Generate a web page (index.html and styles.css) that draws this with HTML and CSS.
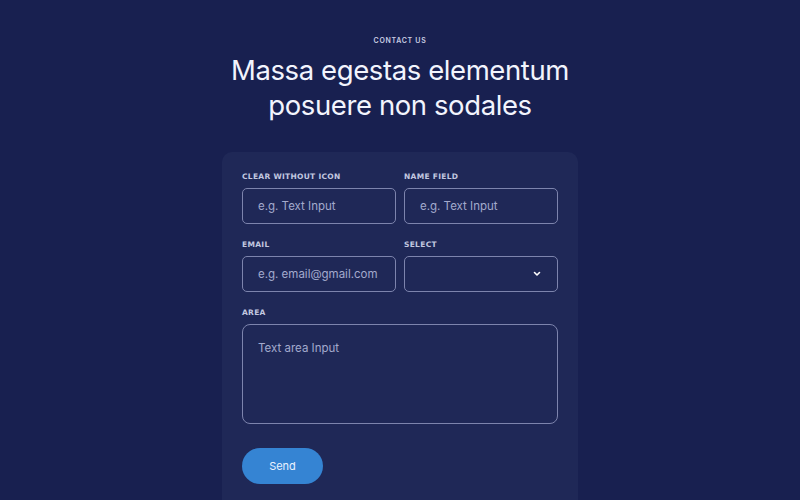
FILE: index.html
```html
<!DOCTYPE html>
<html lang="en">
<head>
<meta charset="utf-8">
<title>Contact us</title>
<link rel="stylesheet" href="styles.css">
</head>
<body>
<section class="page">
  <p class="eyebrow">CONTACT US</p>
  <h1 class="title">Massa egestas elementum<br>posuere non sodales</h1>
  <form class="card">
    <div class="row">
      <label class="field">
        <span class="label">CLEAR WITHOUT ICON</span>
        <input class="input" type="text" placeholder="e.g. Text Input">
      </label>
      <label class="field">
        <span class="label">NAME FIELD</span>
        <input class="input" type="text" placeholder="e.g. Text Input">
      </label>
    </div>
    <div class="row">
      <label class="field">
        <span class="label">EMAIL</span>
        <input class="input" type="email" placeholder="e.g. email@gmail.com">
      </label>
      <label class="field">
        <span class="label">SELECT</span>
        <span class="select">
          <span class="chev"><svg width="8" height="6" viewBox="0 0 8 6"><path d="M1.5 1.5 L4 4 L6.5 1.5" fill="none" stroke="#ffffff" stroke-width="1.6" stroke-linecap="round" stroke-linejoin="round"/></svg></span>
        </span>
      </label>
    </div>
    <label class="field">
      <span class="label">AREA</span>
      <textarea class="area" placeholder="Text area Input"></textarea>
    </label>
    <div class="actions">
      <button class="btn" type="button">Send</button>
    </div>
  </form>
</section>
</body>
</html>
```
FILE: styles.css
```css
* { box-sizing: border-box; }
html, body { margin: 0; height: 100%; }
body {
  background: #182050;
  font-family: "Inter", "Noto Sans", sans-serif;
  color: #eef0fb;
  overflow: hidden;
}
.page {
  display: flex;
  flex-direction: column;
  align-items: center;
  padding-top: 36px;
}
.eyebrow {
  margin: 0;
  font-size: 7px;
  font-weight: 600;
  letter-spacing: 0.7px;
  line-height: 9px;
  color: #c9cde3;
}
.title {
  margin: 8px 0 0;
  font-size: 27.5px;
  font-weight: 400;
  line-height: 35px;
  text-align: center;
  letter-spacing: -0.4px;
  color: #f2f4fd;
}
.card {
  margin-top: 29px;
  width: 356px;
  background: #1f2857;
  border-radius: 10px;
  padding: 20px 20px 40px;
  display: flex;
  flex-direction: column;
  gap: 16px;
}
.row {
  display: flex;
  gap: 8px;
}
.field {
  flex: 1;
  display: flex;
  flex-direction: column;
  gap: 7px;
}
.label {
  font-family: "DejaVu Sans", sans-serif;
  font-weight: 700;
  font-size: 7.5px;
  line-height: 9px;
  letter-spacing: 0.3px;
  color: #c3c8e0;
}
.input, .select, .area {
  display: block;
  width: 100%;
  height: 36px;
  background: transparent;
  border: 1px solid #7d84ad;
  border-radius: 5px;
  font-family: "Inter", sans-serif;
  font-size: 11.5px;
  color: #eef0fb;
  padding: 0 15px;
  outline: none;
}
.input::placeholder, .area::placeholder {
  color: #a3aacd;
  opacity: 1;
}
.select {
  display: flex;
  align-items: center;
  justify-content: flex-end;
  padding-right: 16px;
}
.chev { display: flex; }
.area {
  height: 100px;
  border-radius: 8px;
  padding-top: 16px;
  resize: none;
}
.actions {
  padding-top: 8px;
}
.btn {
  width: 81px;
  height: 36px;
  border: 0;
  border-radius: 18px;
  background: #3584d3;
  color: #eaf2ff;
  font-family: "Inter", sans-serif;
  font-size: 11px;
  cursor: pointer;
}
```
